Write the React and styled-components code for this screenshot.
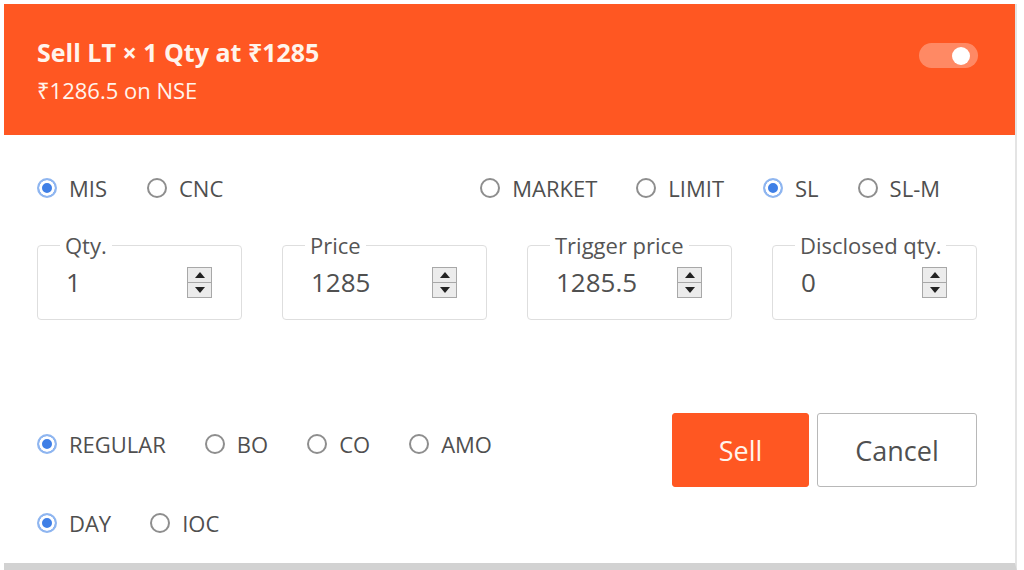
import React from "react";
import styled, { createGlobalStyle } from "styled-components";

const GlobalStyle = createGlobalStyle`
  html, body {
    margin: 0;
    padding: 0;
    background: #ffffff;
  }
  body {
    font-family: "Open Sans", "Noto Sans", "DejaVu Sans", sans-serif;
    color: #555;
  }
  * { box-sizing: border-box; }
`;

const Page = styled.div`
  padding: 4px 0 0 4px;
  width: 1024px;
  height: 570px;
  overflow: hidden;
`;

const Panel = styled.div`
  width: 1013px;
  background: #fff;
  border-right: 2px solid #e4e4e4;
  border-bottom: 8px solid #d2d2d2;
`;

const Header = styled.div`
  height: 131px;
  background: #ff5722;
  padding: 33px 37px 0 33px;
  display: flex;
  justify-content: space-between;
  align-items: flex-start;
  color: #fff4ec;
`;

const Title = styled.div`
  font-size: 25px;
  line-height: 30px;
  font-weight: 700;
`;

const Subtitle = styled.div`
  font-size: 22px;
  line-height: 26px;
  margin-top: 10px;
`;

const Toggle = styled.div`
  margin-top: 6px;
  width: 59px;
  height: 25px;
  border-radius: 13px;
  background: rgba(255, 255, 255, 0.3);
  display: flex;
  align-items: center;
  justify-content: flex-end;
  padding-right: 8px;

  &::after {
    content: "";
    width: 18px;
    height: 18px;
    border-radius: 50%;
    background: #fff;
  }
`;

const Body = styled.div`
  padding: 41px 38px 28px 33px;
`;

const TopRow = styled.div`
  display: flex;
  justify-content: space-between;
`;

const RadioGroup = styled.div`
  display: flex;
  gap: ${(p) => p.gap || 39}px;
  margin-right: ${(p) => p.right || 0}px;
`;

const RadioItem = styled.label`
  display: flex;
  align-items: center;
  gap: 12px;
  height: 24px;
  font-size: 22px;
  color: #4f4f4f;
`;

const Dot = styled.span`
  width: 20px;
  height: 20px;
  border-radius: 50%;
  flex-shrink: 0;
  border: 2px solid ${(p) => (p.checked ? "#8fb6f0" : "#8e8e8e")};
  background: ${(p) => (p.checked ? "#3f7fe6" : "#fff")};
  box-shadow: ${(p) => (p.checked ? "inset 0 0 0 3px #fff" : "none")};
`;

const Radio = ({ label, checked }) => (
  <RadioItem>
    <Dot checked={checked} />
    {label}
  </RadioItem>
);

const Fields = styled.div`
  display: grid;
  grid-template-columns: repeat(4, 1fr);
  gap: 40px;
  margin-top: 34px;
`;

const Field = styled.fieldset`
  margin: 0;
  height: 86px;
  border: 1px solid #dedede;
  border-radius: 4px;
  padding: 0 29px 0 28px;
`;

const Legend = styled.legend`
  font-size: 22px;
  line-height: 22px;
  padding: 0 5px;
  margin-left: -6px;
  color: #555;
`;

const FieldRow = styled.div`
  display: flex;
  align-items: center;
  justify-content: space-between;
  height: 52px;
`;

const Value = styled.span`
  font-size: 26px;
  color: #505050;
`;

const Spinner = styled.div`
  width: 25px;
  height: 31px;
  border: 1px solid #a8a8a8;
  background: #ececec;
  display: flex;
  flex-direction: column;
`;

const SpinHalf = styled.div`
  flex: 1;
  display: flex;
  align-items: center;
  justify-content: center;
  border-top: ${(p) => (p.down ? "1px solid #a8a8a8" : "none")};

  &::after {
    content: "";
    border-left: 5px solid transparent;
    border-right: 5px solid transparent;
    ${(p) =>
      p.down ? "border-top: 6px solid #222;" : "border-bottom: 6px solid #222;"}
  }
`;

const NumberField = ({ label, value }) => (
  <Field>
    <Legend>{label}</Legend>
    <FieldRow>
      <Value>{value}</Value>
      <Spinner>
        <SpinHalf />
        <SpinHalf down />
      </Spinner>
    </FieldRow>
  </Field>
);

const Bottom = styled.div`
  display: flex;
  justify-content: space-between;
  align-items: flex-start;
  margin-top: 93px;
`;

const Options = styled.div`
  display: flex;
  flex-direction: column;
  gap: 55px;
  padding-top: 19px;
`;

const Actions = styled.div`
  display: flex;
  gap: 8px;
`;

const Button = styled.button`
  height: 74px;
  width: ${(p) => p.w}px;
  border-radius: 3px;
  font-family: inherit;
  font-size: 27px;
  cursor: pointer;
  border: 1px solid ${(p) => (p.primary ? "#ff5722" : "#b8b8b8")};
  background: ${(p) => (p.primary ? "#ff5722" : "#fff")};
  color: ${(p) => (p.primary ? "#fff4ec" : "#505050")};
`;

export default function App() {
  return (
    <>
      <GlobalStyle />
      <Page>
        <Panel>
          <Header>
            <div>
              <Title>Sell LT × 1 Qty at ₹1285</Title>
              <Subtitle>₹1286.5 on NSE</Subtitle>
            </div>
            <Toggle />
          </Header>
          <Body>
            <TopRow>
              <RadioGroup gap={40}>
                <Radio label="MIS" checked />
                <Radio label="CNC" />
              </RadioGroup>
              <RadioGroup right={37}>
                <Radio label="MARKET" />
                <Radio label="LIMIT" />
                <Radio label="SL" checked />
                <Radio label="SL-M" />
              </RadioGroup>
            </TopRow>
            <Fields>
              <NumberField label="Qty." value="1" />
              <NumberField label="Price" value="1285" />
              <NumberField label="Trigger price" value="1285.5" />
              <NumberField label="Disclosed qty." value="0" />
            </Fields>
            <Bottom>
              <Options>
                <RadioGroup>
                  <Radio label="REGULAR" checked />
                  <Radio label="BO" />
                  <Radio label="CO" />
                  <Radio label="AMO" />
                </RadioGroup>
                <RadioGroup>
                  <Radio label="DAY" checked />
                  <Radio label="IOC" />
                </RadioGroup>
              </Options>
              <Actions>
                <Button primary w={137}>Sell</Button>
                <Button w={160}>Cancel</Button>
              </Actions>
            </Bottom>
          </Body>
        </Panel>
      </Page>
    </>
  );
}
